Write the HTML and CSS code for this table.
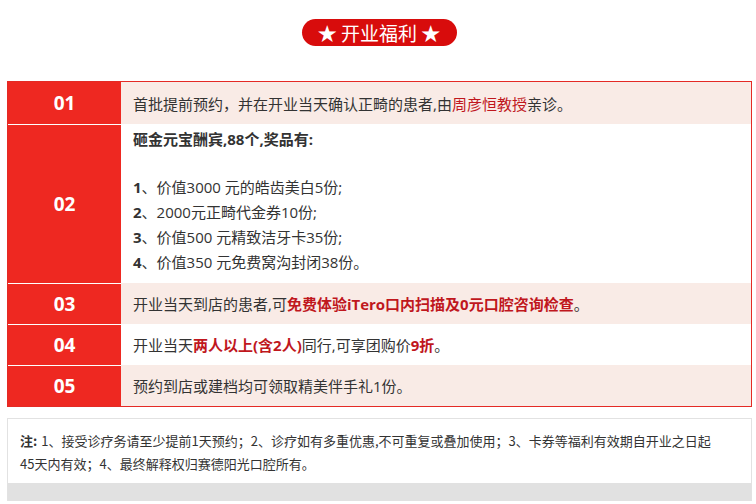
FILE: index.html
```html
<!DOCTYPE html>
<html lang="zh">
<head>
<meta charset="utf-8">
<link rel="stylesheet" href="styles.css">
</head>
<body>
<div class="head"><span class="pill">★ 开业福利 ★</span></div>
<div class="table">
  <div class="row pink r1">
    <div class="num">01</div>
    <div class="txt">首批提前预约，并在开业当天确认正畸的患者,由<span class="red">周彦恒教授</span>亲诊。</div>
  </div>
  <div class="row white r2">
    <div class="num">02</div>
    <div class="txt list">
      <p class="b">砸金元宝酬宾,88个,奖品有:</p>
      <p class="gap"><b>1</b>、价值3000 元的皓齿美白5份;</p>
      <p><b>2</b>、2000元正畸代金券10份;</p>
      <p><b>3</b>、价值500 元精致洁牙卡35份;</p>
      <p><b>4</b>、价值350 元免费窝沟封闭38份。</p>
    </div>
  </div>
  <div class="row pink">
    <div class="num">03</div>
    <div class="txt">开业当天到店的患者,可<span class="red b">免费体验iTero口内扫描及0元口腔咨询检查</span>。</div>
  </div>
  <div class="row white">
    <div class="num">04</div>
    <div class="txt">开业当天<span class="red b">两人以上(含2人)</span>同行,可享团购价<span class="red b">9折</span>。</div>
  </div>
  <div class="row pink">
    <div class="num">05</div>
    <div class="txt">预约到店或建档均可领取精美伴手礼1份。</div>
  </div>
</div>
<div class="note">
  <p class="note-text"><b class="note-label">注:</b>1、接受诊疗务请至少提前1天预约；2、诊疗如有多重优惠,不可重复或叠加使用；3、卡券等福利有效期自开业之日起45天内有效；4、最终解释权归赛德阳光口腔所有。</p>
  <div class="note-band"></div>
</div>
</body>
</html>
```
FILE: styles.css
```css
* { box-sizing: border-box; }
body {
  margin: 0;
  background: #fff;
  font-family: "Noto Sans CJK SC", "Noto Sans", sans-serif;
  color: #333;
}
.head {
  padding-top: 19px;
  display: flex;
  justify-content: center;
}
.pill {
  display: inline-flex;
  align-items: center;
  justify-content: center;
  width: 155px;
  height: 27px;
  border-radius: 14px;
  background: #d80c0c;
  color: #fff;
  font-size: 19px;
  line-height: 27px;
  margin-left: 2px;
}
.table {
  margin: 35px 4px 0 7px;
  border: 1px solid #e42a25;
}
.row {
  display: grid;
  grid-template-columns: 113px 1fr;
  height: 41px;
}
.row.r1 { height: 42px; }
.row.r2 { height: 159px; }
.pink { background: #f9ebe6; }
.white { background: #fff; }
.num {
  background: #ee2821;
  color: #fff;
  font-family: "Open Sans", "Noto Sans", sans-serif;
  font-weight: 700;
  font-size: 19px;
  display: flex;
  align-items: center;
  justify-content: center;
  border-top: 1px solid #fff;
}
.r1 .num { border-top: none; }
.txt {
  display: flex;
  align-items: center;
  padding-left: 12px;
  font-family: "Open Sans", "Noto Sans CJK SC", sans-serif;
  font-size: 15px;
  white-space: nowrap;
}
.list {
  display: block;
  padding-top: 3px;
}
.list p {
  margin: 0;
  line-height: 25px;
}
.list p.gap { margin-top: 23px; }
.b { font-weight: 700; }
.red { color: #c0171d; }
.note {
  margin: 11px 4px 0 7px;
  border: 1px solid #e2e2e2;
  border-bottom: none;
}
.note-text {
  margin: 0;
  padding: 10px 30px 8px 12px;
  font-size: 13px;
  line-height: 23px;
  color: #333;
}
.note-label { margin-right: 4px; }
.note-band {
  height: 18px;
  background: #e1e1e1;
}
```
